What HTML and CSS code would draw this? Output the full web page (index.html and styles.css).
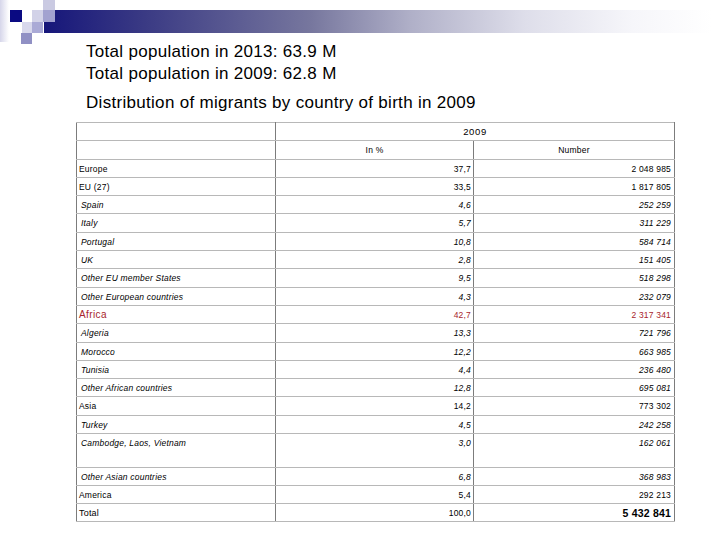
FILE: index.html
```html
<!DOCTYPE html>
<html>
<head>
<meta charset="utf-8">
<link rel="stylesheet" href="styles.css">
</head>
<body>
<div class="slide">
  <header class="banner">
    <div class="bar"></div>
    <span class="sq sq-side"></span>
    <span class="sq sq-navy"></span>
    <span class="sq sq-a"></span>
    <span class="sq sq-b"></span>
    <span class="sq sq-c"></span>
    <span class="sq sq-d"></span>
    <span class="sq sq-e"></span>
    <span class="sq sq-f"></span>
  </header>
  <div class="intro">
    <p class="line">Total population in 2013: 63.9 M</p>
    <p class="line">Total population in 2009: 62.8 M</p>
    <p class="line caption">Distribution of migrants by country of birth in 2009</p>
  </div>
  <table class="data">
    <colgroup><col class="c1"><col class="c2"><col class="c3"></colgroup>
    <tr class="r">
      <td></td><td colspan="2" class="year">2009</td>
    </tr>
    <tr class="r">
      <td></td><td class="head">In %</td><td class="head">Number</td>
    </tr>
    <tr class="r"><td class="lab">Europe</td><td class="n2">37,7</td><td class="n3">2 048 985</td></tr>
    <tr class="r"><td class="lab">EU (27)</td><td class="n2">33,5</td><td class="n3">1 817 805</td></tr>
    <tr class="r sub"><td class="lab">Spain</td><td class="n2">4,6</td><td class="n3">252 259</td></tr>
    <tr class="r sub"><td class="lab">Italy</td><td class="n2">5,7</td><td class="n3">311 229</td></tr>
    <tr class="r sub"><td class="lab">Portugal</td><td class="n2">10,8</td><td class="n3">584 714</td></tr>
    <tr class="r sub"><td class="lab">UK</td><td class="n2">2,8</td><td class="n3">151 405</td></tr>
    <tr class="r sub"><td class="lab">Other EU member States</td><td class="n2">9,5</td><td class="n3">518 298</td></tr>
    <tr class="r sub"><td class="lab">Other European countries</td><td class="n2">4,3</td><td class="n3">232 079</td></tr>
    <tr class="r red"><td class="lab big">Africa</td><td class="n2">42,7</td><td class="n3">2 317 341</td></tr>
    <tr class="r sub"><td class="lab">Algeria</td><td class="n2">13,3</td><td class="n3">721 796</td></tr>
    <tr class="r sub"><td class="lab">Morocco</td><td class="n2">12,2</td><td class="n3">663 985</td></tr>
    <tr class="r sub"><td class="lab">Tunisia</td><td class="n2">4,4</td><td class="n3">236 480</td></tr>
    <tr class="r sub"><td class="lab">Other African countries</td><td class="n2">12,8</td><td class="n3">695 081</td></tr>
    <tr class="r"><td class="lab">Asia</td><td class="n2">14,2</td><td class="n3">773 302</td></tr>
    <tr class="r sub"><td class="lab">Turkey</td><td class="n2">4,5</td><td class="n3">242 258</td></tr>
    <tr class="r sub tall"><td class="lab">Cambodge, Laos, Vietnam</td><td class="n2">3,0</td><td class="n3">162 061</td></tr>
    <tr class="r sub"><td class="lab">Other Asian countries</td><td class="n2">6,8</td><td class="n3">368 983</td></tr>
    <tr class="r"><td class="lab">America</td><td class="n2">5,4</td><td class="n3">292 213</td></tr>
    <tr class="r total"><td class="lab">Total</td><td class="n2">100,0</td><td class="n3 grand">5 432 841</td></tr>
  </table>
</div>
</body>
</html>
```
FILE: styles.css
```css
html, body {
  margin: 0;
  padding: 0;
  background: #ffffff;
}
.slide {
  width: 720px;
  height: 540px;
  position: relative;
  overflow: hidden;
  font-family: "Liberation Sans", Arial, sans-serif;
  color: #000;
}
.banner {
  position: relative;
  height: 41px;
  padding-top: 10px;
  box-sizing: border-box;
}
.bar {
  margin-left: 44px;
  margin-right: 8px;
  height: 23px;
  background: linear-gradient(to right, #16167a 0%, #3a3a84 15%, #77779e 40%, #b0b0c8 55%, #dedeea 72%, #f6f6fa 88%, #ffffff 100%);
}
.sq {
  position: absolute;
  display: block;
}
.sq-side {
  left: 0; top: 0; width: 9px; height: 42px;
  background: linear-gradient(to right, #d6d6ea, #ffffff);
}
.sq-navy { left: 10px; top: 10px; width: 12px; height: 12px; background: #0a0a82; }
.sq-a { left: 43px; top: 0; width: 12px; height: 10px; background: #cacae2; }
.sq-b { left: 32px; top: 10px; width: 11px; height: 12px; background: #d2d2e8; }
.sq-c { left: 43px; top: 10px; width: 12px; height: 12px; background: #a2a2d0; }
.sq-d { left: 22px; top: 22px; width: 10px; height: 11px; background: #d8d8ec; }
.sq-e { left: 32px; top: 22px; width: 11px; height: 11px; background: #aaaad6; }
.sq-f { left: 21px; top: 33px; width: 11px; height: 11px; background: #9090c4; }

.intro {
  padding-left: 86px;
}
.line {
  margin: 0;
  font-size: 17px;
  line-height: 22px;
  letter-spacing: 0.3px;
}
.caption {
  margin-top: 7px;
}
.data {
  margin: 8px 0 0 76px;
  width: 598px;
  border-collapse: collapse;
  table-layout: fixed;
  border: 1px solid #8a8a8a;
  font-size: 8.5px;
  letter-spacing: 0.2px;
  color: #000;
}
.c1 { width: 199px; }
.c2 { width: 198px; }
.c3 { width: 201px; }
.data td {
  border-top: 1px solid #b8b8b8;
  border-bottom: 1px solid #b8b8b8;
  border-left: 1px solid #7c7c7c;
  border-right: 1px solid #7c7c7c;
  padding: 4px 0 0 0;
  vertical-align: top;
  line-height: 10px;
  height: 13.3px;
  white-space: nowrap;
}
.data .tall td { height: 28.5px; }
.year {
  text-align: center;
  font-size: 9.5px;
  letter-spacing: 0.6px;
}
.head { text-align: center; }
.lab { padding-left: 2px !important; }
.sub .lab { padding-left: 4px !important; }
.sub td { font-style: italic; }
.n2 { text-align: right; padding-right: 2px !important; }
.n3 { text-align: right; padding-right: 3px !important; }
.red td { color: #a8242c; }
.red .big { font-size: 10px; letter-spacing: 0.4px; }
.red .n2, .red .n3 { font-size: 8.5px; }
.total .lab { font-size: 9px; }
.grand {
  font-size: 10.5px;
  font-weight: bold;
  letter-spacing: 0.2px;
}
```
